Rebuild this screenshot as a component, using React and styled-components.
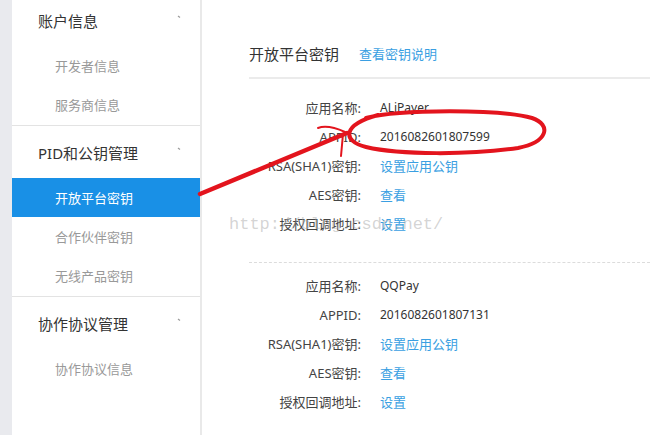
import styled, { createGlobalStyle } from "styled-components";

const GlobalStyle = createGlobalStyle`
    html, body {
        margin: 0;
        padding: 0;
        background: #fff;
    }
    body {
        font-family: "Noto Sans", "Noto Sans CJK SC", sans-serif;
        color: #333;
    }
`;

const menu = [
    { title: "账户信息", items: ["开发者信息", "服务商信息"] },
    { title: "PID和公钥管理", items: ["开放平台密钥", "合作伙伴密钥", "无线产品密钥"] },
    { title: "协作协议管理", items: ["协作协议信息"] },
];

const apps = [
    { name: "ALiPayer", appid: "2016082601807599" },
    { name: "QQPay", appid: "2016082601807131" },
];

const StyledPage = styled.div`
    position: relative;
    width: 650px;
    height: 435px;
    overflow: hidden;
    display: flex;
    background: #e9eaee;
    padding-left: 12px;
    box-sizing: border-box;
`;

const StyledSidebar = styled.nav`
    width: 188px;
    flex-shrink: 0;
    background: #fff;
    border-right: 2px solid #e9e9e9;
    box-sizing: content-box;
    margin-top: -6px;
    padding-bottom: 6px;
`;

const StyledGroup = styled.div`
    border-bottom: 1px solid #e3e3e3;
    padding-bottom: 1px;
    &:last-child {
        border-bottom: none;
    }
`;

const StyledGroupTitle = styled.div`
    height: 52px;
    display: flex;
    align-items: center;
    justify-content: space-between;
    padding: 0 17px 0 26px;
    font-size: 15px;
    color: #333;

    svg {
        margin-bottom: 6px;
    }
`;

const StyledItem = styled.div`
    height: 39px;
    display: flex;
    align-items: center;
    padding-left: 43px;
    font-size: 13px;
    color: ${({ active }) => (active ? "#fff" : "#999")};
    background: ${({ active }) => (active ? "#1990e6" : "transparent")};
`;

const StyledMain = styled.main`
    flex: 1;
    background: #fff;
    padding-left: 47px;
`;

const StyledHeader = styled.div`
    display: flex;
    align-items: center;
    gap: 20px;
    padding-top: 42px;
    height: 22px;
    padding-bottom: 13px;
    border-bottom: 2px solid #ebebeb;

    h2 {
        margin: 0;
        font-size: 15px;
        font-weight: 400;
        color: #333;
    }

    a {
        font-size: 13px;
        color: #3a9fe2;
        text-decoration: none;
    }
`;

const StyledApp = styled.div`
    padding: ${({ first }) => (first ? "14px 0 24px" : "8px 0 0")};
    border-bottom: ${({ first }) => (first ? "1px dashed #dcdcdc" : "none")};
`;

const StyledRow = styled.div`
    display: grid;
    grid-template-columns: 112px 1fr;
    column-gap: 19px;
    height: 29px;
    align-items: center;
    font-size: 13px;
`;

const StyledLabel = styled.span`
    text-align: right;
    color: #444;
`;

const StyledValue = styled.span`
    font-size: ${({ latin }) => (latin ? "12px" : "13px")};
    color: ${({ link }) => (link ? "#3a9fe2" : "#333")};
`;

const StyledWatermark = styled.div`
    position: absolute;
    left: 229px;
    top: 215px;
    font-family: "Liberation Mono", monospace;
    font-size: 17px;
    color: rgba(160, 160, 160, 0.45);
    pointer-events: none;
`;

const StyledInk = styled.svg`
    position: absolute;
    left: 0;
    top: 0;
    pointer-events: none;
`;

const Caret = () => (
    <svg width="6" height="4" viewBox="0 0 6 4">
        <polyline points="1,1 3,2.5" fill="none" stroke="#9a9a9a" strokeWidth="1.2" />
    </svg>
);

const AppKeys = ({ app, first }) => (
    <StyledApp first={first}>
        <StyledRow>
            <StyledLabel>应用名称:</StyledLabel>
            <StyledValue latin>{app.name}</StyledValue>
        </StyledRow>
        <StyledRow>
            <StyledLabel>APPID:</StyledLabel>
            <StyledValue latin>{app.appid}</StyledValue>
        </StyledRow>
        <StyledRow>
            <StyledLabel>RSA(SHA1)密钥:</StyledLabel>
            <StyledValue link>设置应用公钥</StyledValue>
        </StyledRow>
        <StyledRow>
            <StyledLabel>AES密钥:</StyledLabel>
            <StyledValue link>查看</StyledValue>
        </StyledRow>
        <StyledRow>
            <StyledLabel>授权回调地址:</StyledLabel>
            <StyledValue link>设置</StyledValue>
        </StyledRow>
    </StyledApp>
);

const App = () => {
    return (
        <>
            <GlobalStyle />
            <StyledPage>
                <StyledSidebar>
                    {menu.map((group) => (
                        <StyledGroup key={group.title}>
                            <StyledGroupTitle>
                                <span>{group.title}</span>
                                <Caret />
                            </StyledGroupTitle>
                            {group.items.map((item) => (
                                <StyledItem key={item} active={item === "开放平台密钥"}>
                                    {item}
                                </StyledItem>
                            ))}
                        </StyledGroup>
                    ))}
                </StyledSidebar>
                <StyledMain>
                    <StyledHeader>
                        <h2>开放平台密钥</h2>
                        <a href="#">查看密钥说明</a>
                    </StyledHeader>
                    {apps.map((app, index) => (
                        <AppKeys key={app.appid} app={app} first={index === 0} />
                    ))}
                </StyledMain>

                {/* hand-drawn annotation over the screenshot */}
                <StyledWatermark>http://blog.csdn.net/</StyledWatermark>
                <StyledInk width="650" height="435" viewBox="0 0 650 435">
                    <g fill="none" stroke="#e3141d" strokeLinecap="round">
                        <line x1="200" y1="194" x2="347" y2="133" strokeWidth="4.5" />
                        <path d="M318 128 C 326 125, 336 128, 345 132" strokeWidth="2" />
                        <path d="M343 134 L 341 156" strokeWidth="2" />
                        <path
                            d="M366 118 C 400 109, 500 109, 532 118 C 552 125, 548 142, 518 148 C 470 155, 400 155, 366 147 C 342 141, 342 125, 378 115"
                            strokeWidth="4"
                        />
                    </g>
                </StyledInk>
            </StyledPage>
        </>
    );
};

export default App;
